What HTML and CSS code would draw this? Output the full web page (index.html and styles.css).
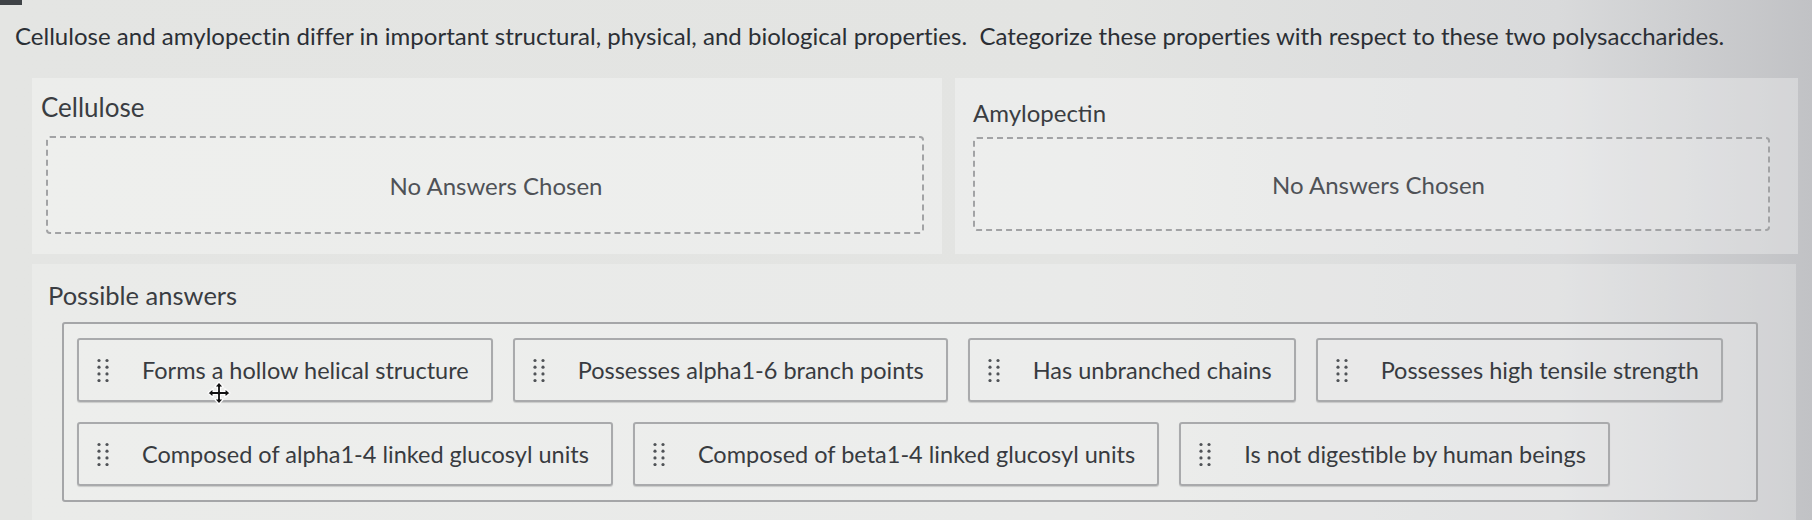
FILE: index.html
```html
<!DOCTYPE html>
<html lang="en">
<head>
    <meta charset="UTF-8">
    <meta name="viewport" content="width=device-width, initial-scale=1.0">
    <link rel="stylesheet" href="styles.css">
</head>
<body>
    <div class="topbar"></div>

    <p class="question">Cellulose and amylopectin differ in important structural, physical, and biological properties.&nbsp; Categorize these properties with respect to these two polysaccharides.</p>

    <div class="categories">
        <div class="category category-left">
            <div class="category-title">Cellulose</div>
            <div class="dropzone">No Answers Chosen</div>
        </div>
        <div class="category category-right">
            <div class="category-title">Amylopectin</div>
            <div class="dropzone">No Answers Chosen</div>
        </div>
    </div>

    <div class="answers-panel">
        <div class="answers-title">Possible answers</div>
        <div class="answers-list">
            <div class="answer">
                <svg class="grip" viewBox="0 0 12 24" width="12" height="24"><circle cx="2" cy="2.5" r="1.6"/><circle cx="10" cy="2.5" r="1.6"/><circle cx="2" cy="9.2" r="1.6"/><circle cx="10" cy="9.2" r="1.6"/><circle cx="2" cy="15.9" r="1.6"/><circle cx="10" cy="15.9" r="1.6"/><circle cx="2" cy="22.5" r="1.6"/><circle cx="10" cy="22.5" r="1.6"/></svg>
                <span>Forms a hollow helical structure</span>
                <svg class="cursor" viewBox="0 0 24 24" width="24" height="24">
                    <path d="M12 1 L16.5 6 H13.5 V10.5 H18 V7.5 L23 12 L18 16.5 V13.5 H13.5 V18 H16.5 L12 23 L7.5 18 H10.5 V13.5 H6 V16.5 L1 12 L6 7.5 V10.5 H10.5 V6 H7.5 Z" fill="#111" stroke="#fff" stroke-width="1.2" stroke-linejoin="round"/>
                </svg>
            </div>
            <div class="answer">
                <svg class="grip" viewBox="0 0 12 24" width="12" height="24"><circle cx="2" cy="2.5" r="1.6"/><circle cx="10" cy="2.5" r="1.6"/><circle cx="2" cy="9.2" r="1.6"/><circle cx="10" cy="9.2" r="1.6"/><circle cx="2" cy="15.9" r="1.6"/><circle cx="10" cy="15.9" r="1.6"/><circle cx="2" cy="22.5" r="1.6"/><circle cx="10" cy="22.5" r="1.6"/></svg>
                <span>Possesses alpha1-6 branch points</span>
            </div>
            <div class="answer">
                <svg class="grip" viewBox="0 0 12 24" width="12" height="24"><circle cx="2" cy="2.5" r="1.6"/><circle cx="10" cy="2.5" r="1.6"/><circle cx="2" cy="9.2" r="1.6"/><circle cx="10" cy="9.2" r="1.6"/><circle cx="2" cy="15.9" r="1.6"/><circle cx="10" cy="15.9" r="1.6"/><circle cx="2" cy="22.5" r="1.6"/><circle cx="10" cy="22.5" r="1.6"/></svg>
                <span>Has unbranched chains</span>
            </div>
            <div class="answer">
                <svg class="grip" viewBox="0 0 12 24" width="12" height="24"><circle cx="2" cy="2.5" r="1.6"/><circle cx="10" cy="2.5" r="1.6"/><circle cx="2" cy="9.2" r="1.6"/><circle cx="10" cy="9.2" r="1.6"/><circle cx="2" cy="15.9" r="1.6"/><circle cx="10" cy="15.9" r="1.6"/><circle cx="2" cy="22.5" r="1.6"/><circle cx="10" cy="22.5" r="1.6"/></svg>
                <span>Possesses high tensile strength</span>
            </div>
            <div class="answer">
                <svg class="grip" viewBox="0 0 12 24" width="12" height="24"><circle cx="2" cy="2.5" r="1.6"/><circle cx="10" cy="2.5" r="1.6"/><circle cx="2" cy="9.2" r="1.6"/><circle cx="10" cy="9.2" r="1.6"/><circle cx="2" cy="15.9" r="1.6"/><circle cx="10" cy="15.9" r="1.6"/><circle cx="2" cy="22.5" r="1.6"/><circle cx="10" cy="22.5" r="1.6"/></svg>
                <span>Composed of alpha1-4 linked glucosyl units</span>
            </div>
            <div class="answer">
                <svg class="grip" viewBox="0 0 12 24" width="12" height="24"><circle cx="2" cy="2.5" r="1.6"/><circle cx="10" cy="2.5" r="1.6"/><circle cx="2" cy="9.2" r="1.6"/><circle cx="10" cy="9.2" r="1.6"/><circle cx="2" cy="15.9" r="1.6"/><circle cx="10" cy="15.9" r="1.6"/><circle cx="2" cy="22.5" r="1.6"/><circle cx="10" cy="22.5" r="1.6"/></svg>
                <span>Composed of beta1-4 linked glucosyl units</span>
            </div>
            <div class="answer">
                <svg class="grip" viewBox="0 0 12 24" width="12" height="24"><circle cx="2" cy="2.5" r="1.6"/><circle cx="10" cy="2.5" r="1.6"/><circle cx="2" cy="9.2" r="1.6"/><circle cx="10" cy="9.2" r="1.6"/><circle cx="2" cy="15.9" r="1.6"/><circle cx="10" cy="15.9" r="1.6"/><circle cx="2" cy="22.5" r="1.6"/><circle cx="10" cy="22.5" r="1.6"/></svg>
                <span>Is not digestible by human beings</span>
            </div>
        </div>
    </div>
</body>
</html>
```

FILE: styles.css
```css
* {
    margin: 0;
    padding: 0;
    box-sizing: border-box;
}

body {
    font-family: Lato, "Open Sans", sans-serif;
    width: 1812px;
    height: 520px;
    overflow: hidden;
    color: #3a3d42;
    background: linear-gradient(to right, #e4e5e3 0%, #e3e4e2 60%, #d9dadb 86%, #c1c2c5 100%);
}

.topbar {
    width: 22px;
    height: 5px;
    background-color: #3f4347;
}

.question {
    margin: 16px 0 0 15px;
    font-size: 24px;
    letter-spacing: 0.02px;
    line-height: 30px;
    color: #2b2f35;
    white-space: nowrap;
}

.categories {
    display: grid;
    grid-template-columns: 910px 1fr;
    gap: 13px;
    margin: 27px 14px 0 32px;
}

.category {
    height: 176px;
    background: rgba(255, 255, 255, 0.3);
    padding: 14px 18px 21px 14px;
}

.category-right {
    padding: 20px 28px 21px 18px;
}

.category-left .category-title {
    margin-left: -5px;
    margin-bottom: 14px;
}

.category-title {
    font-size: 26px;
    line-height: 30px;
}

.category-right .category-title {
    font-size: 24px;
    margin-bottom: 9px;
}

.dropzone {
    height: 98px;
    border: 2px dashed #a2a3a5;
    border-radius: 4px;
    display: flex;
    align-items: center;
    justify-content: center;
    font-size: 24px;
    color: #4f5257;
    background: rgba(255, 255, 255, 0.12);
}

.category-left .dropzone {
    padding-left: 22px;
}

.category-right .dropzone {
    height: 94px;
    padding-left: 14px;
}

.answers-panel {
    margin: 10px 16px 0 32px;
    padding: 16px 0 18px 16px;
    background: rgba(255, 255, 255, 0.24);
}

.answers-title {
    font-size: 25.5px;
    line-height: 30px;
    margin-bottom: 12px;
}

.answers-list {
    margin: 0 38px 0 14px;
    border: 2px solid #a5a6a8;
    border-radius: 3px;
    padding: 14px 10px 14px 13px;
    display: flex;
    flex-wrap: wrap;
    gap: 20px 20px;
    background: rgba(255, 255, 255, 0.15);
}

.answer {
    position: relative;
    height: 64px;
    display: flex;
    align-items: center;
    padding: 0 22px 0 18px;
    border: 2px solid #a9aaac;
    border-radius: 3px;
    box-shadow: 0 1px 1px rgba(0, 0, 0, 0.15);
    font-size: 23.5px;
    color: #383b40;
}

.grip {
    fill: #505357;
    margin-right: 33px;
    flex-shrink: 0;
}

.cursor {
    position: absolute;
    left: 128px;
    top: 41px;
}
```
